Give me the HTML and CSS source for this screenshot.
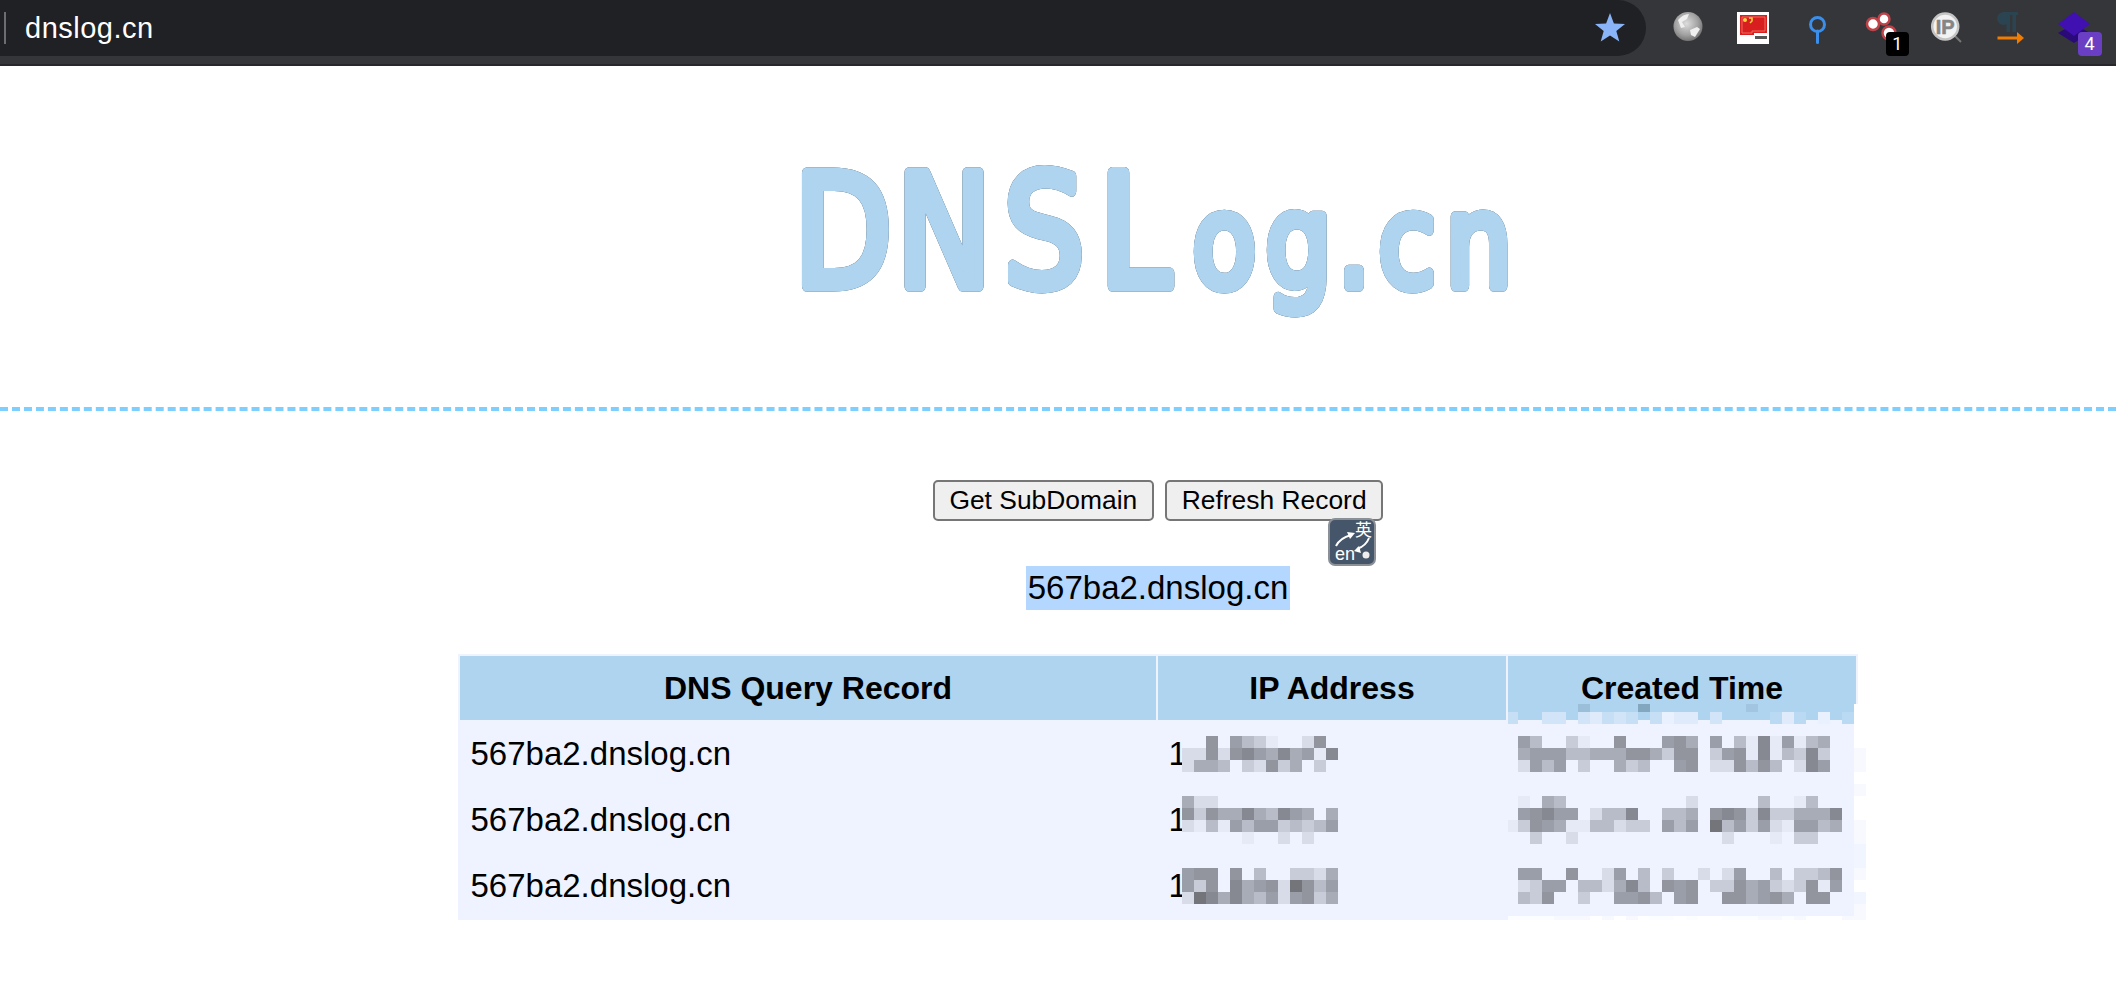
FILE: index.html
```html
<!DOCTYPE html>
<html lang="en">
<head>
<meta charset="utf-8">
<title>DNSLog.cn</title>
<link rel="stylesheet" href="styles.css">
</head>
<body>
<header class="chrome">
  <div class="omnibox">
    <span class="caret"></span>
    <span class="url">dnslog.cn</span>
    <svg class="star" viewBox="0 0 30 30"><polygon points="15,0 18.9,10.4 30,11 21.3,17.9 24.3,28.6 15,22.5 5.7,28.6 8.7,17.9 0,11 11.1,10.4"/></svg>
  </div>
  <div class="extensions">
    <div class="ext">
      <svg class="ext-icon" viewBox="0 0 48 56">
        <defs><radialGradient id="globe" cx="45%" cy="40%" r="65%"><stop offset="0" stop-color="#dcdcdc"/><stop offset=".6" stop-color="#a2a2a2"/><stop offset="1" stop-color="#6a6a6a"/></radialGradient></defs>
        <circle cx="24" cy="26.5" r="14.5" fill="url(#globe)"/>
        <path d="M14 20q5-6 11-6l-2 5-5 3 3 5-4 1zM26 30l7-3 3 2-5 8-4-2z" fill="#efefef"/>
      </svg>
    </div>
    <div class="ext">
      <svg class="ext-icon" viewBox="0 0 48 56">
        <rect x="8" y="12" width="32" height="32" fill="#fff"/>
        <path d="M11 15h27v18H25v2H11z" fill="#d81e1e"/>
        <path d="M13 17h23v14H23v2H13z" fill="none" stroke="#ee6a5c" stroke-width="1"/>
        <circle cx="16" cy="20" r="2" fill="#f7d23c"/>
        <path d="M20 18h3v3l-2 2" fill="none" stroke="#f7d23c" stroke-width="1.5"/>
        <rect x="26" y="36" width="12" height="3" fill="#555"/>
      </svg>
    </div>
    <div class="ext">
      <svg class="ext-icon" viewBox="0 0 48 56">
        <circle cx="24.5" cy="24.5" r="7" fill="none" stroke="#3b8eea" stroke-width="3"/>
        <line x1="24.5" y1="31" x2="24.5" y2="42.5" stroke="#3b8eea" stroke-width="3" stroke-linecap="round"/>
      </svg>
    </div>
    <div class="ext">
      <svg class="ext-icon" viewBox="0 0 48 56">
        <g fill="#fff" stroke="#bd4349" stroke-width="2.5">
          <circle cx="15" cy="24" r="6"/>
          <circle cx="26" cy="19" r="5.5"/>
          <circle cx="31" cy="33" r="6.5"/>
        </g>
      </svg>
      <span class="badge badge-black">1</span>
    </div>
    <div class="ext">
      <svg class="ext-icon" viewBox="0 0 48 56">
        <line x1="32" y1="36" x2="38" y2="42" stroke="#777" stroke-width="2"/>
        <circle cx="22.2" cy="26.5" r="13" fill="#f2f2f2" stroke="#c4c4c4" stroke-width="2.5"/>
        <text class="ip-text" x="22.2" y="33.5">IP</text>
      </svg>
    </div>
    <div class="ext">
      <svg class="ext-icon" viewBox="0 0 48 56">
        <g fill="#2b4452">
          <circle cx="16.5" cy="18.5" r="6.5"/>
          <rect x="16" y="12" width="15" height="3"/>
          <rect x="19.5" y="12" width="3.5" height="20"/>
          <rect x="25.5" y="12" width="3.5" height="20"/>
        </g>
        <rect x="10.5" y="36.5" width="22" height="3" fill="#f07c00"/>
        <polygon points="30,32 37,38 30,44" fill="#f07c00"/>
      </svg>
    </div>
    <div class="ext">
      <svg class="ext-icon" viewBox="0 0 48 56">
        <polygon points="6,33 22,24 38,33 22,43" fill="#2a0a78"/>
        <polygon points="6,24 22,12 38,24 22,36" fill="#4010b0"/>
      </svg>
      <span class="badge badge-purple">4</span>
    </div>
  </div>
</header>

<main>
  <div class="logo-band">
    <svg class="logo" viewBox="0 0 756 190" role="img" aria-label="DNSLog.cn">
      <text class="logo-text" transform="scale(.82 1)" x="17 142 273 390 503 592 680 730 812" y="136"><tspan class="logo-cap">DNSL</tspan><tspan class="logo-low">og.cn</tspan></text>
    </svg>
  </div>
  <hr class="divider">
  <section class="content">
    <div class="actions">
      <button class="btn" type="button">Get SubDomain</button>
      <button class="btn" type="button">Refresh Record</button>
      <div class="translate">
        <span class="tr-zh">英</span>
        <svg class="tr-arrows" viewBox="0 0 44 44">
          <path d="M6 26q4-8 15-11" fill="none" stroke="#fff" stroke-width="2"/>
          <polygon points="25,13 17,12 20,19" fill="#fff"/>
          <path d="M39 18q-3 8-12 11" fill="none" stroke="#fff" stroke-width="2"/>
          <polygon points="24,31 31,33 29,26" fill="#fff"/>
          <circle cx="36" cy="35" r="3.5" fill="#eee"/>
        </svg>
        <span class="tr-en">en</span>
      </div>
    </div>
    <div class="domain"><span class="domain-sel">567ba2.dnslog.cn</span></div>
    <div class="table-wrap">
      <table class="records">
        <colgroup><col class="col-a"><col class="col-b"><col class="col-b"></colgroup>
        <thead>
          <tr><th>DNS Query Record</th><th>IP Address</th><th>Created Time</th></tr>
        </thead>
        <tbody>
          <tr><td>567ba2.dnslog.cn</td><td>1</td><td></td></tr>
          <tr><td>567ba2.dnslog.cn</td><td>1</td><td></td></tr>
          <tr><td>567ba2.dnslog.cn</td><td>1</td><td></td></tr>
        </tbody>
      </table>
      <svg class="mosaic" id="mosaic" width="1416" height="280" viewBox="0 0 1416 280" shape-rendering="crispEdges"></svg>
    </div>
  </section>
</main>
<script src="script.js"></script>
</body>
</html>
```

FILE: styles.css
```css
* { box-sizing: border-box; }
html, body { margin: 0; padding: 0; background: #fff; }
body { font-family: "Liberation Sans", Arial, sans-serif; color: #000; overflow: hidden; }

.chrome {
  display: flex;
  height: 66px;
  background: #35363a;
  border-bottom: 2px solid #27282b;
  align-items: flex-start;
}
.omnibox {
  flex: none;
  width: 1646px;
  height: 56px;
  background: #202124;
  border-radius: 0 28px 28px 0;
  display: flex;
  align-items: center;
  padding-left: 4px;
  padding-right: 21px;
}
.caret { width: 2px; height: 32px; background: #6c6d70; margin-right: 19px; }
.url { color: #fff; font-size: 29px; flex: 1; letter-spacing: .5px; }
.star { width: 30px; height: 30px; fill: #8ab4f8; }

.extensions { display: flex; padding-left: 10px; }
.ext { position: relative; width: 64.6px; height: 56px; display: flex; justify-content: center; }
.ext-icon { width: 48px; height: 56px; }
.badge {
  position: absolute;
  top: 32px;
  width: 23px;
  height: 24px;
  border-radius: 4px;
  color: #fff;
  font-size: 18px;
  line-height: 24px;
  text-align: center;
  font-family: Roboto, "Liberation Sans", sans-serif;
}
.badge-black { left: 36px; background: #000; }
.badge-purple { left: 34px; background: #6a3fc4; width: 24px; }
.ip-text { font: bold 20px "Liberation Sans", sans-serif; fill: #858585; stroke: #858585; stroke-width: .6px; text-anchor: middle; }

.logo-band { height: 341px; padding: 84px 0 0 200px; }
.logo { display: block; width: 756px; height: 190px; margin: 0 auto; overflow: visible; filter: drop-shadow(0 0 .7px #33424f); }
.logo-text {
  font-family: "DejaVu Sans", sans-serif;
  fill: #aed4f0;
  stroke: #aed4f0;
  stroke-width: 11px;
  stroke-linejoin: round;
  stroke-linecap: round;
}
.logo-cap { font-size: 155px; }
.logo-low { font-size: 127px; }

.divider { margin: 0; height: 4px; border: 0; border-top: 4px dashed #7ccfff; }

.content { padding: 69px 0 0 200px; }
.actions { position: relative; display: flex; justify-content: center; gap: 11px; height: 41px; }
.btn {
  height: 41px;
  padding: 0 14.8px;
  font: 26.4px "Liberation Sans", Arial, sans-serif;
  color: #000;
  background: #efefef;
  border: 2px solid #767676;
  border-radius: 5px;
}
.translate {
  position: absolute;
  left: 1128px;
  top: 38px;
  width: 48px;
  height: 48px;
  background: #46566a;
  border: 2px solid #8b9097;
  border-radius: 7px;
  color: #fff;
}
.tr-zh { position: absolute; right: 2px; top: 0; font: 17px/18px "Noto Sans CJK SC", sans-serif; }
.tr-en { position: absolute; left: 5px; bottom: 1px; font: 18px/17px "Liberation Sans", sans-serif; }
.tr-arrows { position: absolute; left: 0; top: 0; width: 44px; height: 44px; }

.domain { margin-top: 45px; display: flex; justify-content: center; height: 44px; }
.domain-sel { background: #b3d7ff; font-size: 33px; line-height: 44px; padding: 0 2px; }

.table-wrap { position: relative; width: 1400px; margin: 44px auto 0; }
.records {
  width: 1400px;
  table-layout: fixed;
  border-collapse: separate;
  border-spacing: 2px;
  background: #eff3ff;
  font-size: 33px;
}
.col-a { width: 696px; }
.col-b { width: 348px; }
.records th { height: 64px; background: #aed4f0; font-size: 32px; font-weight: bold; text-align: center; padding: 0 11px; }
.records td { height: 64px; padding: 0 10.5px; }
.mosaic { position: absolute; left: 0; top: 0; pointer-events: none; }
```

FILE: script.js
```js
// Pixelated redaction blocks: one character per 12px cell.
var SHADES = {
  '1': '#e6eaf6', '2': '#d8dce8', '3': '#c8ccd8', '4': '#b8bcc8', '5': '#a8acb6',
  '6': '#9a9ea8', '7': '#92959e', '8': '#868991', '9': '#74757b',
  a: '#f7f9ff', b: '#f1f5ff', c: '#fcfdff', w: '#ffffff',
  A: '#b9daf2', B: '#c6dff5', C: '#d2e5f8', D: '#dfebfb', E: '#e8f1fd',
  F: '#9cbfd9', G: '#84a7c0', H: '#a2c6e2'
};
var IP_BLOCKS = [
  [736, '..7.6431..27.'], [748, '2272786585618'], [760, '2554.32735.3.'],
  [796, '522..........'], [808, '73755854865.5'], [820, '2141646634346'], [832, '.....1..2.2..'],
  [868, '677.7.4..3325'], [880, '637.856729746'], [892, '2985854626735']
];
var TIME_BLOCKS = [
  [704, '......F....G........H........w', 8],
  [712, 'B..CC.CDBCB.BEDD.C....ADA.E.Aw'],
  [724, '.............................w'],
  [736, '.64..31..7...675.6.41816145..w'],
  [748, '.566644555775377.3671814383..a'],
  [760, '.2646.3..534..67.227474.286..a'],
  [772, '.............................w'],
  [784, '.............................a'],
  [796, '.1.54..........2.....4..14...w'],
  [808, '.67866.2448..445.78738335558.w'],
  [820, '137651144233.646.94636216645.a'],
  [832, '..3..2............2...1.33...a'],
  [844, '.............................b'],
  [856, '.............................b'],
  [868, '.66..7..26.4.3..2.26..4.3347.a'],
  [880, '.2366.442584.767.33756323716.w'],
  [892, '.437..3..6674.67..775675.77..b'],
  [904, '.............................a'],
  [916, 'ccccaaawawawccwcwwcccaacawwwaa']
];
var ORIGIN_X = 458, ORIGIN_Y = 654;
var NS = 'http://www.w3.org/2000/svg';
var svg = document.getElementById('mosaic');
function cell(x, y, w, h, fill) {
  var r = document.createElementNS(NS, 'rect');
  r.setAttribute('x', x - ORIGIN_X);
  r.setAttribute('y', y - ORIGIN_Y);
  r.setAttribute('width', w);
  r.setAttribute('height', h);
  r.setAttribute('fill', fill);
  svg.appendChild(r);
}
IP_BLOCKS.forEach(function (row) {
  row[1].split('').forEach(function (ch, i) {
    if (SHADES[ch]) cell(1182 + 12 * i, row[0], 12, 12, SHADES[ch]);
  });
});
TIME_BLOCKS.forEach(function (row) {
  var h = row[2] || 12;
  row[1].split('').forEach(function (ch, i) {
    if (!SHADES[ch]) return;
    if (i === 0) cell(1508, row[0], 10, h, SHADES[ch]);
    else cell(1506 + 12 * i, row[0], 12, h, SHADES[ch]);
  });
});
```
